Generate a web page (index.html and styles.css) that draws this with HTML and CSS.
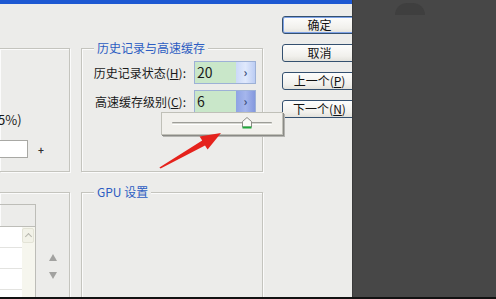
FILE: index.html
```html
<!DOCTYPE html>
<html lang="zh-CN">
<head>
  <meta charset="UTF-8">
  <meta name="viewport" content="width=device-width, initial-scale=1.0">
  <title>首选项 - 性能</title>
  <link rel="stylesheet" href="styles.css">
</head>
<body>

  <div class="screen">
    <div class="dialog">
      <div class="dialog-body">

        <!-- Left column (cut off) -->
        <div class="col-left">
          <div class="box box-memory">
            <p class="pct">5%)</p>
            <div class="memory-row">
              <span class="memory-field"></span>
              <span class="plus">+</span>
            </div>
          </div>

          <div class="box box-disks">
            <div class="list">
              <div class="list-head"></div>
              <div class="list-body">
                <div class="list-rows"></div>
                <div class="list-scroll">
                  <span class="scroll-up"></span>
                </div>
              </div>
            </div>
            <div class="steps">
              <span class="step-up"></span>
              <span class="step-down"></span>
            </div>
          </div>
        </div>

        <!-- Middle column -->
        <div class="col-mid">
          <div class="box group-history">
            <span class="group-title">历史记录与高速缓存</span>

            <div class="field-row">
              <label>历史记录状态(<u>H</u>):</label>
              <div class="spin">
                <span class="spin-value">20</span>
                <span class="spin-btn">›</span>
              </div>
            </div>

            <div class="field-row">
              <label>高速缓存级别(<u>C</u>):</label>
              <div class="spin">
                <span class="spin-value">6</span>
                <span class="spin-btn active">›</span>
              </div>
            </div>
          </div>

          <div class="box group-gpu">
            <span class="group-title">GPU 设置</span>
          </div>
        </div>

        <!-- Buttons -->
        <div class="col-buttons">
          <button class="btn btn-default">确定</button>
          <button class="btn">取消</button>
          <button class="btn">上一个(<u>P</u>)</button>
          <button class="btn">下一个(<u>N</u>)</button>
        </div>

        <!-- Slider popup for cache levels -->
        <div class="slider-popup">
          <div class="slider-track">
            <svg class="slider-thumb" width="10" height="12" viewBox="0 0 10 12">
              <polygon points="0.5,4.5 5,0.5 9.5,4.5 9.5,10 0.5,10" fill="#fbfbf8" stroke="#8a8a84" stroke-width="1"/>
              <rect x="0.5" y="9.5" width="9" height="2" fill="#1fa83a"/>
            </svg>
          </div>
        </div>

        <!-- Red pointer arrow -->
        <svg class="pointer" width="80" height="55" viewBox="0 0 80 55">
          <polygon points="9.4,43.4 52.2,16.6 49.6,12.6 71,9 57.6,25.4 55,21.4 10.6,44.6" fill="#e5221c"/>
        </svg>

      </div>
    </div>

    <div class="backdrop">
      <span class="knob"></span>
    </div>
  </div>

</body>
</html>
```

FILE: styles.css
```css
/* Basic reset */
* {
  margin: 0;
  padding: 0;
  box-sizing: border-box;
}

body {
  font-family: "Noto Sans CJK SC", "Liberation Sans", sans-serif;
  font-size: 12px;
  color: #1a1a1a;
  background-color: #111;
}

u {
  text-decoration: underline;
  text-underline-offset: 1px;
}

.screen {
  display: flex;
  height: 299px;
  border-bottom: 2px solid #121212;
  overflow: hidden;
}

/* Dialog window */
.dialog {
  width: 352px;
  flex-shrink: 0;
  background-color: #ececea;
  border-top: 4px solid #1d58d2;
  overflow: hidden;
}

.dialog-body {
  position: relative;
  display: flex;
  height: 293px;
  overflow: hidden;
}

/* Etched group boxes */
.box {
  flex-shrink: 0;
  border: 1px solid #c4c4be;
  box-shadow: 1px 1px 0 #fbfbfb, inset 1px 1px 0 #fbfbfb;
}

.col-left {
  width: 70px;
  flex-shrink: 0;
  padding-top: 44px;
  display: flex;
  flex-direction: column;
  gap: 20px;
}

.col-left .box {
  border-left: none;
}

.box-memory {
  height: 124px;
  display: flex;
  flex-direction: column;
  justify-content: flex-end;
  padding-bottom: 13px;
}

.pct {
  line-height: 16px;
  margin: 0 0 12px -2px;
  font-size: 13px;
}

.memory-row {
  display: flex;
  align-items: center;
}

.memory-field {
  width: 30px;
  height: 18px;
  margin-left: -2px;
  background-color: #fff;
  border: 1px solid #a8a8a4;
}

.plus {
  margin-left: 10px;
  font-size: 10px;
  font-weight: bold;
  color: #333;
}

.box-disks {
  height: 160px;
  display: flex;
  padding-top: 11px;
}

.list {
  width: 36px;
  display: flex;
  flex-direction: column;
}

.list-head {
  height: 23px;
  border: 1px solid #bdbdb8;
  border-left: none;
}

.list-body {
  flex: 1;
  display: flex;
  border-right: 1px solid #bdbdb8;
}

.list-rows {
  width: 22px;
  background: repeating-linear-gradient(to bottom, #fff 0 20px, #e3e3e0 20px 21px);
}

.list-scroll {
  flex: 1;
  background-color: #f6f6ee;
  padding: 1px 1px 0 0;
}

.scroll-up {
  display: block;
  height: 15px;
  border: 1px solid #e3e3d6;
  border-radius: 2px;
  background-color: #f2f2e8;
  position: relative;
}

/* small chevron drawn with borders */
.scroll-up::after {
  content: "";
  position: absolute;
  left: 3px;
  top: 5px;
  width: 4px;
  height: 4px;
  border-left: 1px solid #b7b7ad;
  border-top: 1px solid #b7b7ad;
  transform: rotate(45deg);
}

.steps {
  display: flex;
  flex-direction: column;
  gap: 11px;
  margin: 50px 0 0 13px;
}

.step-up,
.step-down {
  width: 0;
  height: 0;
  border-left: 4px solid transparent;
  border-right: 4px solid transparent;
}

.step-up {
  border-bottom: 7px solid #a2a2a0;
}

.step-down {
  border-top: 7px solid #a2a2a0;
}

/* Middle column */
.col-mid {
  width: 182px;
  flex-shrink: 0;
  margin-left: 11px;
  padding-top: 44px;
  display: flex;
  flex-direction: column;
  gap: 20px;
}

.col-mid .box {
  display: flex;
  flex-direction: column;
}

.group-title {
  align-self: flex-start;
  margin: -8px 0 0 12px;
  padding: 0 3px;
  line-height: 14px;
  background-color: #ececea;
  color: #2c5dc2;
}

.group-history {
  height: 124px;
}

.group-gpu {
  height: 140px;
}

.field-row {
  display: flex;
  align-items: center;
  justify-content: flex-end;
  gap: 8px;
  height: 23px;
  margin-top: 6px;
  padding-right: 6px;
}

.spin {
  display: flex;
  width: 62px;
  height: 23px;
  border: 1px solid #9db1d6;
}

.spin-value {
  flex: 1;
  background-color: #c9e7c9;
  font-size: 14px;
  line-height: 21px;
  padding-left: 2px;
}

.spin-btn {
  width: 19px;
  background: linear-gradient(to right, #cbd9f8, #e0e9fc 50%, #bccdf4);
  color: #3d4f7d;
  font-weight: bold;
  font-size: 12px;
  line-height: 20px;
  text-align: center;
}

.spin-btn.active {
  background: linear-gradient(to right, #8ea3e4, #a5b6ec 50%, #8498de);
}

/* Buttons */
.col-buttons {
  width: 75px;
  flex-shrink: 0;
  margin-left: 19px;
  padding-top: 12px;
  display: flex;
  flex-direction: column;
  gap: 10px;
}

.btn {
  height: 18px;
  flex-shrink: 0;
  font-family: inherit;
  font-size: 12px;
  line-height: 16px;
  color: #111;
  background: linear-gradient(#fdfdfc, #f1f0ec 70%, #e3e2dc);
  border: 1px solid #34506f;
  border-radius: 3px;
}

.btn-default {
  box-shadow: inset 0 0 0 1px #7ea2e6;
}

/* Slider popup */
.slider-popup {
  position: absolute;
  left: 161px;
  top: 108px;
  width: 122px;
  height: 23px;
  display: flex;
  align-items: center;
  padding: 0 10px;
  background-color: #f1f0ec;
  border: 1px solid #c0c0b8;
  box-shadow: 1px 1px 0 #8a8a86, 2px 2px 0 #b4b4b0;
}

.slider-track {
  position: relative;
  flex: 1;
  height: 3px;
  border-top: 1px solid #9d9d98;
  border-bottom: 1px solid #fff;
  background-color: #d8d8d2;
  border-radius: 1px;
}

.slider-thumb {
  position: absolute;
  left: 70px;
  top: -6px;
}

.pointer {
  position: absolute;
  left: 150px;
  top: 120px;
}

/* Dark background behind the dialog */
.backdrop {
  flex: 1;
  background-color: #474747;
  border-left: 1px solid #3a3a3a;
}

.knob {
  display: block;
  width: 30px;
  height: 12px;
  margin: 3px 0 0 42px;
  background-color: #3f3f3f;
  border-radius: 15px 15px 0 0;
}
```
